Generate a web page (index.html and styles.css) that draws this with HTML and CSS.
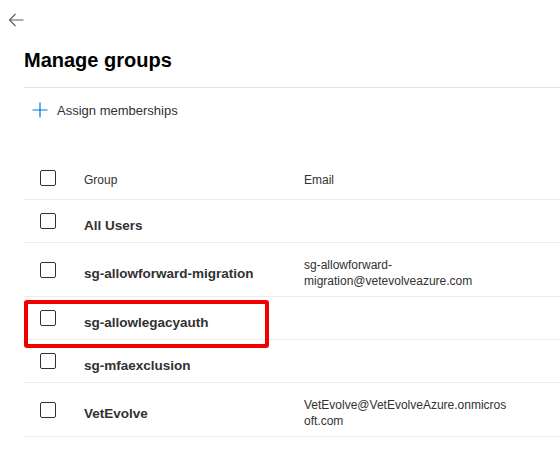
FILE: index.html
```html
<!DOCTYPE html>
<html>
<head>
<meta charset="utf-8">
<link rel="stylesheet" href="styles.css">
</head>
<body>
<div class="page">
  <div class="topbar">
    <svg class="back" width="16" height="16" viewBox="0 0 16 16"><path d="M15.5 8H1.5M7.5 2L1.5 8L7.5 14" fill="none" stroke="#605e5c" stroke-width="1.1"/></svg>
  </div>
  <div class="content">
    <h1 class="title">Manage groups</h1>
    <div class="commandbar">
      <button class="cmd">
        <svg width="16" height="16" viewBox="0 0 16 16"><path d="M8 0.5V15.5M0.5 8H15.5" stroke="#0078d4" stroke-width="1.2" fill="none"/></svg>
        <span>Assign memberships</span>
      </button>
    </div>
    <div class="list">
      <div class="row header">
        <div class="cell check"><span class="box"></span></div>
        <div class="cell hname">Group</div>
        <div class="cell hname">Email</div>
      </div>
      <div class="row">
        <div class="cell check"><span class="box"></span></div>
        <div class="cell name">All Users</div>
        <div class="cell email"></div>
      </div>
      <div class="row">
        <div class="cell check"><span class="box"></span></div>
        <div class="cell name">sg-allowforward-migration</div>
        <div class="cell email">sg-allowforward-migration@vetevolveazure.com</div>
      </div>
      <div class="row highlighted">
        <div class="cell check"><span class="box"></span></div>
        <div class="cell name">sg-allowlegacyauth</div>
        <div class="cell email"></div>
        <div class="redbox"></div>
      </div>
      <div class="row">
        <div class="cell check"><span class="box"></span></div>
        <div class="cell name">sg-mfaexclusion</div>
        <div class="cell email"></div>
      </div>
      <div class="row">
        <div class="cell check"><span class="box"></span></div>
        <div class="cell name">VetEvolve</div>
        <div class="cell email">VetEvolve@VetEvolveAzure.onmicrosoft.com</div>
      </div>
    </div>
  </div>
</div>
</body>
</html>
```
FILE: styles.css
```css
html, body {
  margin: 0;
  padding: 0;
  background: #ffffff;
  font-family: "Liberation Sans", Arial, sans-serif;
  color: #323130;
}
.page {
  width: 560px;
  overflow: hidden;
}
.topbar {
  height: 46px;
  padding: 12px 0 0 8px;
  box-sizing: border-box;
}
.back {
  display: block;
}
.content {
  padding-left: 24px;
}
.title {
  margin: 0;
  font-size: 20px;
  line-height: 28px;
  font-weight: bold;
  color: #000000;
  padding-bottom: 13px;
  border-bottom: 1px solid #e1dfdd;
}
.commandbar {
  height: 44px;
  display: flex;
  align-items: center;
  margin-bottom: 25px;
}
.cmd {
  display: flex;
  align-items: center;
  gap: 9px;
  border: none;
  background: none;
  padding: 0 0 0 8px;
  font-family: inherit;
  font-size: 13px;
  color: #323130;
}
.list {
  display: flex;
  flex-direction: column;
}
.row {
  position: relative;
  display: grid;
  grid-template-columns: 60px 220px 206px;
  min-height: 42px;
  border-bottom: 1px solid #edebe9;
}
.cell {
  display: flex;
  align-items: center;
}
.check {
  padding-left: 16px;
}
.box {
  width: 14px;
  height: 14px;
  border: 1px solid #323130;
  border-radius: 2px;
  display: block;
}
.hname {
  font-size: 12px;
  padding-top: 4px;
}
.name {
  font-size: 13.5px;
  font-weight: bold;
  padding-top: 8px;
}
.email {
  font-size: 12px;
  line-height: 16px;
  overflow-wrap: anywhere;
  padding: 14px 0 7px;
}
.redbox {
  position: absolute;
  left: 0;
  top: 3px;
  width: 245px;
  height: 48px;
  box-sizing: border-box;
  border: 4px solid #f00000;
  border-radius: 3px;
}
```
